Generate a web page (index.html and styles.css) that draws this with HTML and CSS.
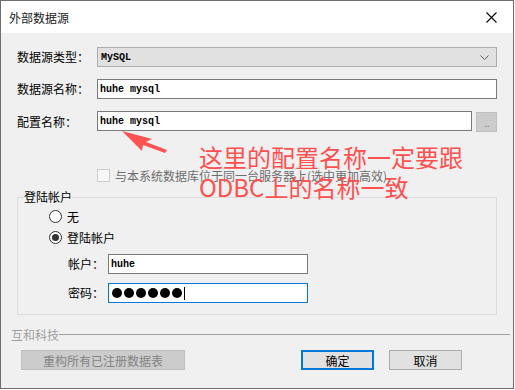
FILE: index.html
```html
<!DOCTYPE html>
<html lang="zh-CN">
<head>
  <meta charset="UTF-8" />
  <title>外部数据源</title>
  <link rel="stylesheet" href="styles.css">
</head>
<body>
  <div class="window">
    <div class="titlebar">
      <span class="title">外部数据源</span>
      <svg class="close" width="11" height="11" viewBox="0 0 11 11">
        <path d="M0.5 0.5 L10.5 10.5 M10.5 0.5 L0.5 10.5" stroke="#000" stroke-width="1.1" fill="none"/>
      </svg>
    </div>

    <div class="content">
      <div class="form-grid">
        <label class="lbl">数据源类型：</label>
        <div class="select">
          <span>MySQL</span>
          <svg width="9" height="5" viewBox="0 0 9 5"><path d="M0.5 0.5 L4.5 4.5 L8.5 0.5" stroke="#606060" fill="none"/></svg>
        </div>

        <label class="lbl">数据源名称：</label>
        <div class="input">huhe mysql</div>

        <label class="lbl">配置名称：</label>
        <div class="input-row">
          <div class="input">huhe mysql</div>
          <div class="dots-btn">. .</div>
        </div>
      </div>

      <div class="check-row">
        <span class="checkbox"></span>
        <span class="check-label">与本系统数据库位于同一台服务器上(选中更加高效)</span>
      </div>

      <fieldset class="group">
        <legend>登陆帐户</legend>
        <div class="radio-row"><span class="radio"></span>无</div>
        <div class="radio-row second"><span class="radio checked"></span>登陆帐户</div>
        <div class="account-grid">
          <label class="lbl">帐户：</label>
          <div class="input small">huhe</div>
          <label class="lbl">密码：</label>
          <div class="input small focus">
            <span class="dot"></span><span class="dot"></span><span class="dot"></span><span class="dot"></span><span class="dot"></span><span class="dot"></span><span class="caret"></span>
          </div>
        </div>
      </fieldset>

      <div class="separator">
        <span>互和科技</span>
        <span class="line"></span>
      </div>

      <div class="buttons">
        <button class="btn disabled">重构所有已注册数据表</button>
        <button class="btn primary">确定</button>
        <button class="btn">取消</button>
      </div>
    </div>

    <!-- annotation on top of the dialog -->
    <svg class="arrow" width="515" height="390" viewBox="0 0 515 390">
      <polygon points="122,131 152,139 146,142 167,150 165,153 143,145 142,151" fill="#ff5252"/>
    </svg>
    <div class="note">这里的配置名称一定要跟<br>ODBC上的名称一致</div>
  </div>
</body>
</html>
```

FILE: styles.css
```css
* {
  margin: 0;
  padding: 0;
  box-sizing: border-box;
}

body {
  background: #fff;
  font-family: "Noto Sans CJK SC", "Noto Sans", sans-serif;
  font-size: 12px;
  color: #000;
}

.window {
  position: relative;
  width: 514px;
  height: 389px;
  border: 1px solid #6e6e6e;
  background: #f0f0f0;
  overflow: hidden;
}

.titlebar {
  height: 32px;
  background: #fff;
  display: flex;
  align-items: center;
  justify-content: space-between;
  padding: 0 16px 0 8px;
}

.title {
  font-size: 12px;
  color: #1a1a1a;
}

.content {
  padding: 14px 16px 0 16px;
}

.form-grid {
  display: grid;
  grid-template-columns: 80px 1fr;
  row-gap: 12px;
  align-items: center;
}

.lbl {
  line-height: 20px;
  white-space: nowrap;
}

.select {
  height: 20px;
  background: #e1e1e1;
  border: 1px solid #adadad;
  display: flex;
  align-items: center;
  justify-content: space-between;
  padding: 0 7px 0 3px;
  font-family: "Liberation Mono", monospace;
  font-size: 10px;
  font-weight: bold;
}

.input {
  height: 20px;
  background: #fff;
  border: 1px solid #7a7a7a;
  padding: 0 2px;
  font-family: "Liberation Mono", monospace;
  font-size: 10px;
  font-weight: bold;
  line-height: 17px;
  display: flex;
  align-items: center;
}

.input-row {
  display: flex;
  gap: 4px;
}

.input-row .input {
  flex: 1;
}

.dots-btn {
  width: 21px;
  height: 20px;
  margin-top: 1px;
  background: #cccccc;
  border: 1px solid #bfbfbf;
  color: #838383;
  font-size: 9px;
  text-align: center;
  line-height: 22px;
  letter-spacing: -1px;
}

.check-row {
  margin-top: 37px;
  padding-left: 80px;
  height: 13px;
  display: flex;
  align-items: center;
  gap: 5px;
}

.checkbox {
  width: 13px;
  height: 13px;
  border: 1px solid #cccccc;
  background: #f7f7f7;
}

.check-label {
  color: #6d6d6d;
  line-height: 13px;
}

.group {
  margin-top: 7px;
  border: 1px solid #dcdcdc;
  padding: 3px 0 11px 31px;
}

.group legend {
  margin-left: -25px;
  line-height: 16px;
}

.radio-row {
  height: 16px;
  display: flex;
  align-items: center;
  gap: 5px;
}

.radio-row.second {
  margin-top: 5px;
}

.radio {
  width: 13px;
  height: 13px;
  border-radius: 50%;
  border: 1px solid #333;
  background: #fff;
  display: flex;
  align-items: center;
  justify-content: center;
}

.radio.checked::after {
  content: "";
  width: 7px;
  height: 7px;
  border-radius: 50%;
  background: #333;
}

.account-grid {
  margin-top: 9px;
  padding-left: 19px;
  display: grid;
  grid-template-columns: 40px 200px;
  row-gap: 9px;
  align-items: center;
}

.input.focus {
  border-color: #0078d7;
  padding-left: 3px;
}

.dot {
  width: 10px;
  height: 10px;
  border-radius: 50%;
  background: #000;
  margin-right: 2px;
}

.caret {
  width: 1px;
  height: 13px;
  background: #000;
}

.separator {
  margin: 11px -13px 0 -6px;
  height: 16px;
  display: flex;
  align-items: center;
  color: #a0a0a0;
}

.separator .line {
  flex: 1;
  height: 1px;
  background: #a0a0a0;
}

.buttons {
  margin-top: 8px;
  display: flex;
  padding-left: 4px;
}

.btn {
  height: 20px;
  width: 73px;
  font-family: inherit;
  font-size: 12px;
  background: #e1e1e1;
  border: 1px solid #adadad;
  color: #000;
}

.btn.disabled {
  width: 164px;
  background: #cccccc;
  border-color: #bfbfbf;
  color: #838383;
  margin-right: 116px;
}

.btn.primary {
  border: 2px solid #0078d7;
  margin-right: 15px;
}

.arrow {
  position: absolute;
  left: -1px;
  top: -1px;
  pointer-events: none;
}

.note {
  position: absolute;
  left: 198px;
  top: 141px;
  font-size: 24px;
  line-height: 30px;
  color: #ff5050;
  white-space: nowrap;
}
```
